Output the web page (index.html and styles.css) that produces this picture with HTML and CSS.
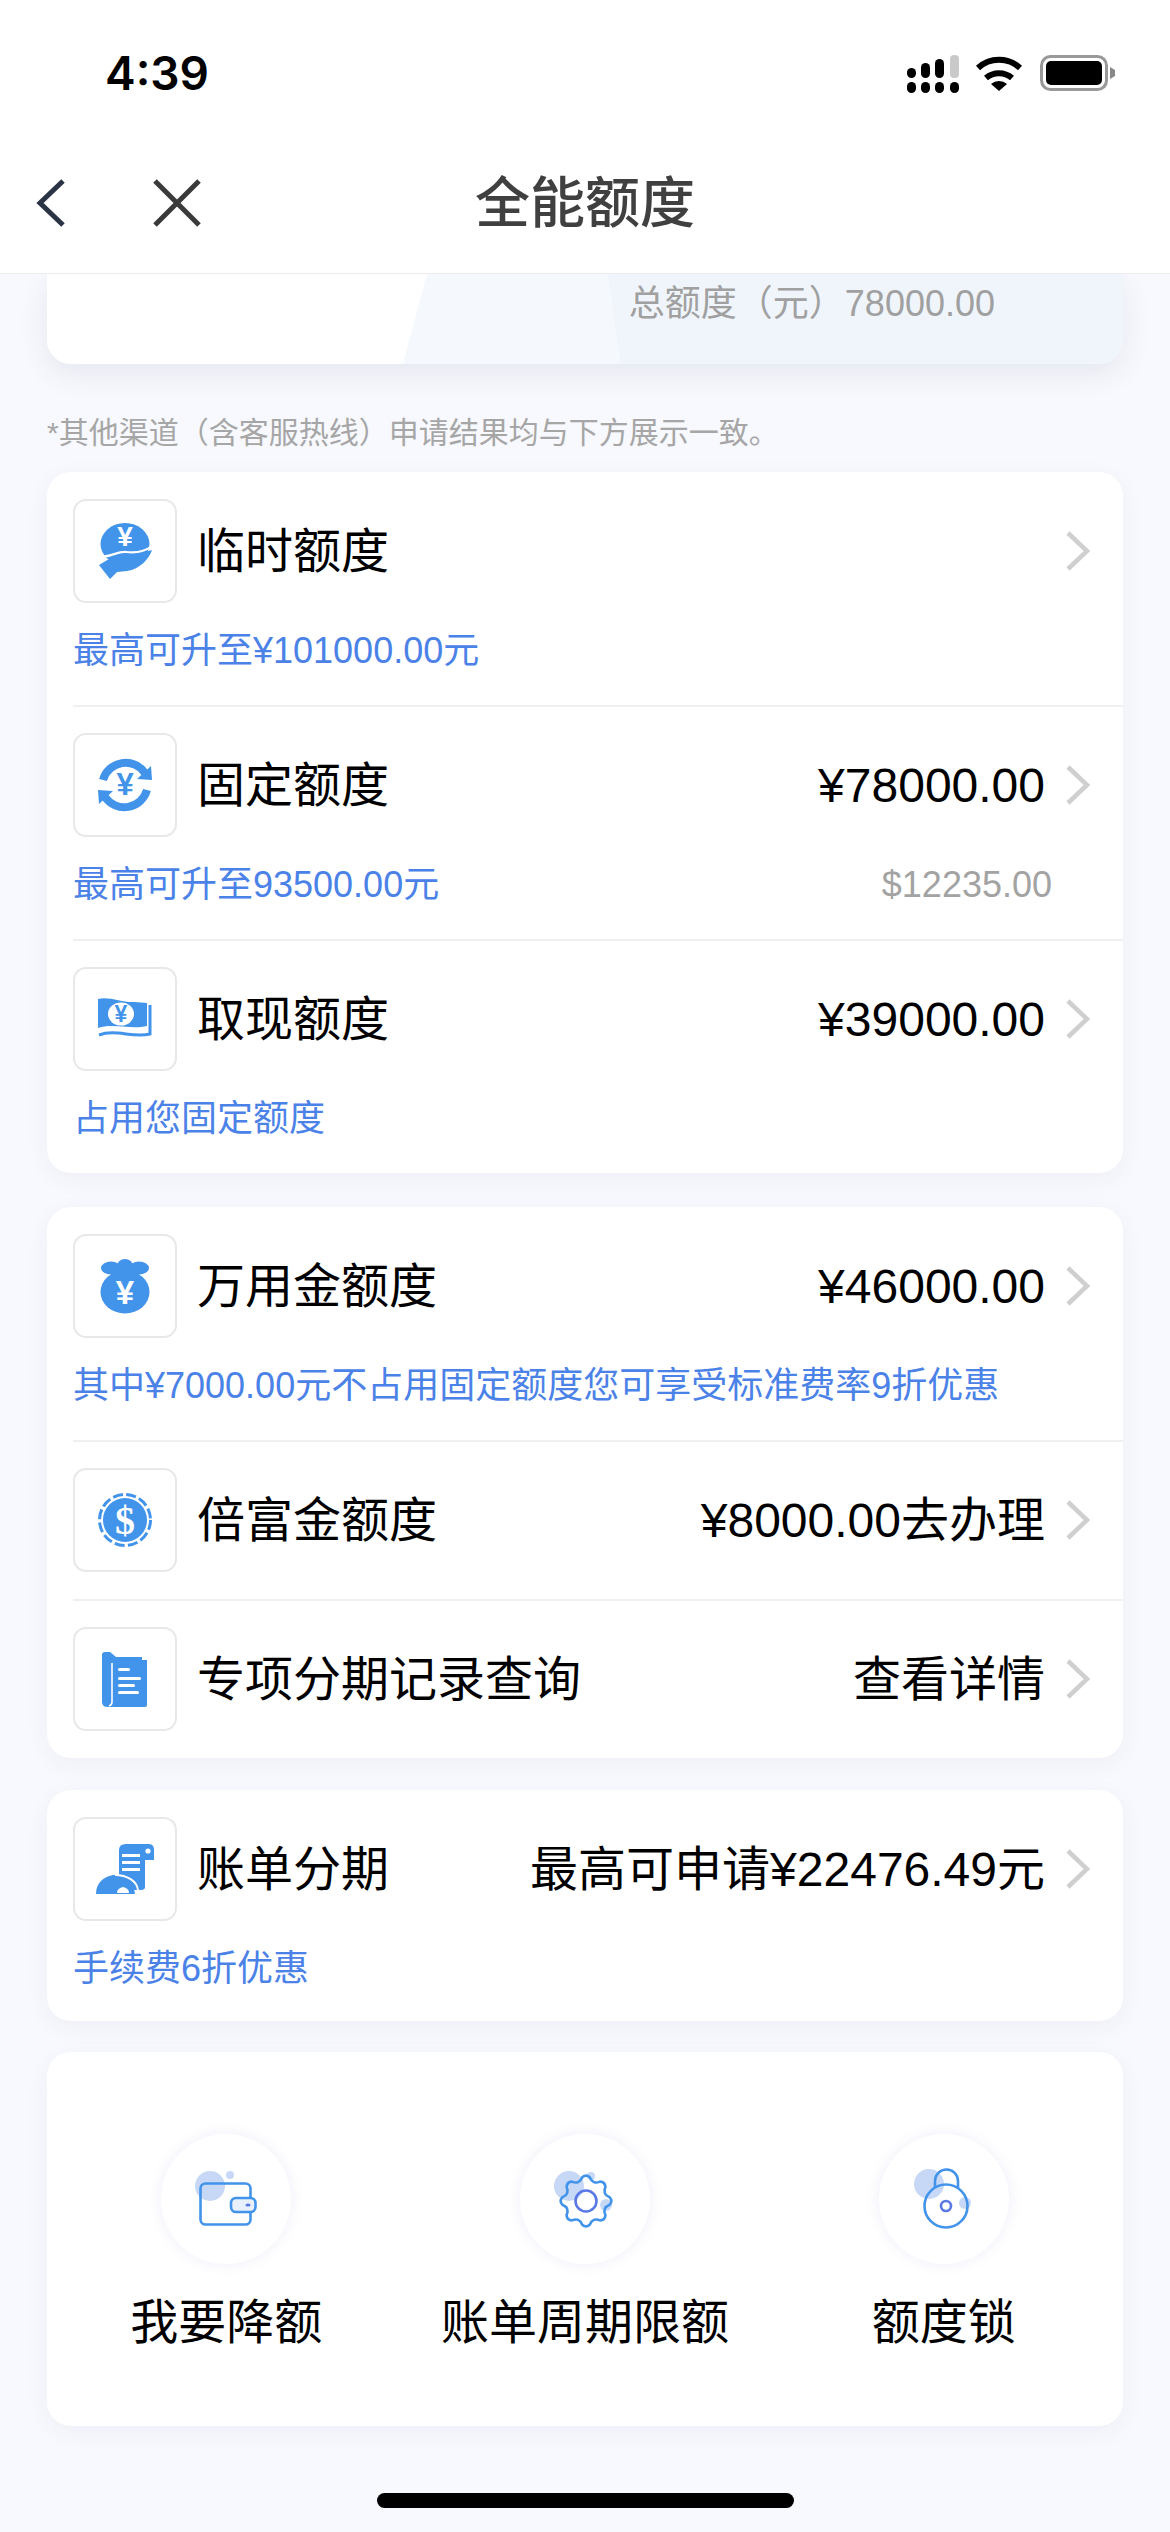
FILE: index.html
```html
<!DOCTYPE html>
<html lang="zh-CN">
  <head>
    <meta charset="utf-8">
    <title>全能额度</title>
    <link rel="stylesheet" href="styles.css">
  </head>

  <body>
    <header class="top">
      <div class="status">
        <span class="time">4:39</span>
        <div class="status-icons">
          <svg class="signal" viewBox="0 0 52 38">
            <rect x="0" y="13" width="9" height="10" rx="4.5"/>
            <rect x="14" y="8" width="9" height="15" rx="4.5"/>
            <rect x="28" y="4" width="9" height="19" rx="4.5"/>
            <rect x="43" y="0" width="9" height="23" rx="4" fill="#c9c9c9"/>
            <rect x="0" y="27" width="9" height="11" rx="4.5"/>
            <rect x="14" y="27" width="9" height="11" rx="4.5"/>
            <rect x="28" y="27" width="9" height="11" rx="4.5"/>
            <rect x="43" y="27" width="9" height="11" rx="4.5"/>
          </svg>
          <svg class="wifi" viewBox="0 0 48 36">
            <path d="M3 13 A31 31 0 0 1 45 13" fill="none" stroke="#000" stroke-width="6"/>
            <path d="M11 23 A20 20 0 0 1 37 23" fill="none" stroke="#000" stroke-width="6"/>
            <path d="M16 29 A12 12 0 0 1 32 29 L24 36 Z"/>
          </svg>
          <svg class="battery" viewBox="0 0 75 36">
            <rect x="1.5" y="1.5" width="65" height="33" rx="9" fill="none" stroke="#999" stroke-width="3"/>
            <rect x="6" y="6" width="56" height="24" rx="5"/>
            <path d="M70 12 L75 15 V21 L70 24 Z" fill="#888"/>
          </svg>
        </div>
      </div>
      <nav class="nav">
        <div class="nav-left">
          <svg class="back" viewBox="0 0 30 50">
            <path d="M27 3 L4 25 L27 47" fill="none" stroke="#2b3445" stroke-width="5"/>
          </svg>
          <svg class="close" viewBox="0 0 50 50">
            <path d="M3 3 L47 47 M47 3 L3 47" fill="none" stroke="#3a3a3a" stroke-width="5"/>
          </svg>
        </div>
        <h1>全能额度</h1>
      </nav>
    </header>

    <main class="page">
      <section class="summary">
        <div class="summary-total">总额度（元）78000.00</div>
      </section>

      <p class="note">*其他渠道（含客服热线）申请结果均与下方展示一致。</p>

      <section class="card">
        <div class="row">
          <div class="row-head">
            <div class="icon-box">
              <svg viewBox="0 0 104 104">
                <ellipse cx="52" cy="45" rx="24.5" ry="21" fill="#4293ea"/>
                <path d="M26 66 L36 60 C45 55 52 58 60 57 C67 56 73 52 79 51 C76 60 67 70 54 72 L44 73 L37 80 Z" fill="#4293ea"/>
                <path d="M28 57 C37 59 44 52 53 53 C61 54 70 54 79 47" fill="none" stroke="#fff" stroke-width="2.2"/>
                <text class="glyph" x="52" y="47" font-size="28">¥</text>
              </svg>
            </div>
            <span class="title">临时额度</span>
            <svg class="arrow" viewBox="0 0 26 42"><path d="M3 3 L22 21 L3 39"/></svg>
          </div>
          <div class="sub"><span class="hint">最高可升至¥101000.00元</span></div>
        </div>

        <div class="row">
          <div class="row-head">
            <div class="icon-box">
              <svg viewBox="0 0 104 104">
                <path d="M30 47 A23.500 23.500 0 0 1 72 40" fill="none" stroke="#4293ea" stroke-width="8"/>
                <path d="M64 46 L79 47 L78 33 Z" fill="#4293ea"/>
                <path d="M74 57 A23.500 23.500 0 0 1 32 64" fill="none" stroke="#4293ea" stroke-width="8"/>
                <path d="M40 58 L25 57 L26 71 Z" fill="#4293ea"/>
                <text class="glyph glyph-blue" x="52" y="62" font-size="31">¥</text>
              </svg>
            </div>
            <span class="title">固定额度</span>
            <span class="value">¥78000.00</span>
            <svg class="arrow" viewBox="0 0 26 42"><path d="M3 3 L22 21 L3 39"/></svg>
          </div>
          <div class="sub">
            <span class="hint">最高可升至93500.00元</span>
            <span class="usd">$12235.00</span>
          </div>
        </div>

        <div class="row">
          <div class="row-head">
            <div class="icon-box">
              <svg viewBox="0 0 104 104">
                <path d="M25 32 C36 29 50 36 62 35 L74 36 V59 C58 63 40 56 25 61 Z" fill="#4293ea"/>
                <ellipse cx="48" cy="47" rx="13" ry="11.500" fill="#fff"/>
                <path d="M77 38 V67 C60 71 42 62 26 68" fill="none" stroke="#4293ea" stroke-width="3"/>
                <text class="glyph glyph-blue" x="48" y="55" font-size="23">¥</text>
              </svg>
            </div>
            <span class="title">取现额度</span>
            <span class="value">¥39000.00</span>
            <svg class="arrow" viewBox="0 0 26 42"><path d="M3 3 L22 21 L3 39"/></svg>
          </div>
          <div class="sub"><span class="hint">占用您固定额度</span></div>
        </div>
      </section>

      <section class="card card-gap">
        <div class="row">
          <div class="row-head">
            <div class="icon-box">
              <svg viewBox="0 0 104 104">
                <ellipse cx="38" cy="34" rx="10" ry="6.500" fill="#4293ea"/>
                <ellipse cx="66" cy="34" rx="10" ry="6.500" fill="#4293ea"/>
                <ellipse cx="52" cy="32" rx="8" ry="7" fill="#4293ea"/>
                <ellipse cx="52" cy="58" rx="24.500" ry="21.500" fill="#4293ea"/>
                <path d="M40 36 H64 L66 42 H38 Z" fill="#4293ea"/>
                <text class="glyph" x="52" y="70" font-size="33">¥</text>
              </svg>
            </div>
            <span class="title">万用金额度</span>
            <span class="value">¥46000.00</span>
            <svg class="arrow" viewBox="0 0 26 42"><path d="M3 3 L22 21 L3 39"/></svg>
          </div>
          <div class="sub"><span class="hint">其中¥7000.00元不占用固定额度您可享受标准费率9折优惠</span></div>
        </div>

        <div class="row row-plain">
          <div class="row-head">
            <div class="icon-box">
              <svg viewBox="0 0 104 104">
                <circle cx="52" cy="52" r="22" fill="#4293ea"/>
                <circle cx="52" cy="52" r="25.500" fill="none" stroke="#4293ea" stroke-width="3" stroke-dasharray="10 3.400"/>
                <text class="glyph glyph-serif" x="52" y="66" font-size="40">$</text>
              </svg>
            </div>
            <span class="title">倍富金额度</span>
            <span class="value">¥8000.00去办理</span>
            <svg class="arrow" viewBox="0 0 26 42"><path d="M3 3 L22 21 L3 39"/></svg>
          </div>
        </div>

        <div class="row row-plain">
          <div class="row-head">
            <div class="icon-box">
              <svg viewBox="0 0 104 104">
                <path d="M29 28 Q29 25 32 25 H37 L43 30 H69 V33 H74 V78 Q74 80 72 80 H35 Q29 80 29 75 Z" fill="#4293ea"/>
                <path d="M39 36 V75 Q39 78 36 79" fill="none" stroke="#fff" stroke-width="1.6"/>
                <rect x="45" y="41" width="12" height="3" rx="1.5" fill="#fff"/>
                <rect x="45" y="50" width="23" height="3" rx="1.5" fill="#fff"/>
                <rect x="45" y="57" width="17" height="3" rx="1.5" fill="#fff"/>
                <rect x="45" y="64" width="21" height="3" rx="1.5" fill="#fff"/>
              </svg>
            </div>
            <span class="title">专项分期记录查询</span>
            <span class="value">查看详情</span>
            <svg class="arrow" viewBox="0 0 26 42"><path d="M3 3 L22 21 L3 39"/></svg>
          </div>
        </div>
      </section>

      <section class="card card-gap-small">
        <div class="row row-short">
          <div class="row-head">
            <div class="icon-box">
              <svg viewBox="0 0 104 104">
                <path d="M46 60 V33 Q46 27 53 27 H76 Q81 27 81 33 V43 H72 V70 Q72 73 68 73 H60 L50 60 Z" fill="#4293ea"/>
                <path d="M23 77 C23 66 30 60 40 58 C50 57 60 62 62 77 Z" fill="#4293ea"/>
                <path d="M42 58 C54 58 64 64 65 73" fill="none" stroke="#fff" stroke-width="2"/>
                <path d="M50 70 A7 6 0 0 1 56 76 H44 A7 6 0 0 1 50 70 Z" fill="#fff"/>
                <rect x="49" y="37" width="18" height="3" fill="#fff"/>
                <rect x="49" y="44" width="18" height="3" fill="#fff"/>
                <rect x="49" y="51" width="18" height="3" fill="#fff"/>
                <circle cx="75" cy="34" r="2.600" fill="#fff"/>
              </svg>
            </div>
            <span class="title">账单分期</span>
            <span class="value">最高可申请¥22476.49元</span>
            <svg class="arrow" viewBox="0 0 26 42"><path d="M3 3 L22 21 L3 39"/></svg>
          </div>
          <div class="sub"><span class="hint">手续费6折优惠</span></div>
        </div>
      </section>

      <section class="card actions">
        <div class="action">
          <div class="action-icon">
            <svg viewBox="0 0 130 130">
              <circle cx="49" cy="52" r="15" fill="#c7d8f6"/>
              <circle cx="69" cy="41" r="4" fill="#c7d8f6"/>
              <rect x="39.5" y="49.5" width="50" height="41" rx="5" fill="none" stroke="#4293ea" stroke-width="2.6"/>
              <rect x="70" y="64" width="24.500" height="14" rx="5" fill="#e8f0fc" stroke="#4293ea" stroke-width="2.6"/>
              <ellipse cx="87" cy="71" rx="2.600" ry="1.600" fill="#5a78e6"/>
            </svg>
          </div>
          <span class="action-label">我要降额</span>
        </div>
        <div class="action">
          <div class="action-icon">
            <svg viewBox="0 0 130 130">
              <circle cx="49" cy="52" r="15" fill="#c7d8f6"/>
              <circle cx="71" cy="42" r="4" fill="#c7d8f6"/>
              <circle cx="86" cy="71" r="6" fill="#c7d8f6"/>
              <path transform="translate(66 67)" fill="none" stroke="#4293ea" stroke-width="2.6"
                d="M-3.75 -23.7 Q0 -27 3.75 -23.7 Q6.7 -16.17 14.11 -19.42 Q19.09 -19.09 19.42 -14.11 Q16.17 -6.7 23.7 -3.75 Q27 0 23.7 3.75 Q16.17 6.7 19.42 14.11 Q19.09 19.09 14.11 19.42 Q6.7 16.17 3.75 23.7 Q0 27 -3.75 23.7 Q-6.7 16.17 -14.11 19.42 Q-19.09 19.09 -19.42 14.11 Q-16.17 6.7 -23.7 3.75 Q-27 0 -23.7 -3.75 Q-16.17 -6.7 -19.42 -14.11 Q-19.09 -19.09 -14.11 -19.42 Q-6.7 -16.17 -3.75 -23.7 Z"/>
              <circle cx="66" cy="67" r="10.500" fill="none" stroke="#5a78e6" stroke-width="2.6"/>
            </svg>
          </div>
          <span class="action-label">账单周期限额</span>
        </div>
        <div class="action">
          <div class="action-icon">
            <svg viewBox="0 0 130 130">
              <circle cx="50" cy="50" r="15" fill="#c7d8f6"/>
              <circle cx="86" cy="69" r="6" fill="#c7d8f6"/>
              <path d="M56 54 V47 A11.500 11.500 0 0 1 79 47 V54" fill="none" stroke="#4293ea" stroke-width="2.6"/>
              <circle cx="67" cy="72" r="21.500" fill="none" stroke="#4293ea" stroke-width="2.6"/>
              <circle cx="67" cy="72" r="5" fill="none" stroke="#5a78e6" stroke-width="2.6"/>
            </svg>
          </div>
          <span class="action-label">额度锁</span>
        </div>
      </section>

      <div class="home-bar"></div>
    </main>
  </body>
</html>
```

FILE: styles.css
```css
/* general styling */
* {
  box-sizing: border-box;
  margin: 0;
  padding: 0;
}

html,
body {
  height: 100%;
  margin: 0;
}

body {
  background-color: #f8f9fe;
  color: #000;
  font-family: "Liberation Sans", "Noto Sans CJK SC", sans-serif;
  overflow: hidden;
}

/* status bar and title bar */
.top {
  background-color: #fff;
  border-bottom: 1px solid #ececec;
  height: 274px;
  position: relative;
  z-index: 1;
}

.status {
  align-items: flex-start;
  display: flex;
  height: 133px;
  justify-content: space-between;
  padding: 51px 55px 0 105px;
}

.time {
  font-family: Inter, "Liberation Sans", sans-serif;
  font-size: 46px;
  font-weight: 600;
  line-height: 44px;
}

.status-icons {
  align-items: flex-start;
  display: flex;
  padding-top: 4px;
}

.signal {
  height: 38px;
  width: 52px;
}

.wifi {
  height: 36px;
  margin-left: 16px;
  width: 48px;
}

.battery {
  height: 36px;
  margin-left: 17px;
  width: 75px;
}

.nav {
  align-items: center;
  display: grid;
  grid-template-columns: 1fr auto 1fr;
  height: 140px;
}

.nav-left {
  align-items: center;
  display: flex;
  gap: 86px;
  padding-left: 36px;
}

.back {
  height: 50px;
  width: 30px;
}

.close {
  height: 50px;
  width: 50px;
}

h1 {
  color: #404040;
  font-size: 55px;
  font-weight: 500;
  line-height: 70px;
}

/* page body */
.page {
  padding: 0 47px;
}

.summary {
  background:
    linear-gradient(82deg, transparent 568px, #f0f5fc 568px),
    linear-gradient(105deg, #fff 367px, #f5f8fc 367px);
  border-radius: 0 0 24px 24px;
  box-shadow: 0 10px 30px rgba(40, 50, 90, 0.09);
  display: flex;
  height: 90px;
  justify-content: flex-end;
  padding: 8px 128px 0 0;
}

.summary-total {
  color: #a0a0a0;
  font-size: 36px;
  line-height: 44px;
}

.note {
  color: #a6a6a6;
  font-size: 30px;
  line-height: 40px;
  margin-top: 49px;
}

.card {
  background-color: #fff;
  border-radius: 24px;
  box-shadow: 0 6px 24px rgba(40, 50, 90, 0.05);
  margin-top: 19px;
  overflow: hidden;
}

.card-gap {
  margin-top: 34px;
}

.card-gap-small {
  margin-top: 32px;
}

/* rows */
.row {
  border-top: 2px solid #f0f0f0;
  margin-left: 26px;
  padding: 26px 32px 29px 0;
}

.row:first-child {
  border-top: 0;
  padding-top: 27px;
}

.row-plain {
  padding-bottom: 27px;
}

.row-short {
  padding-bottom: 27px;
}

.row-head {
  align-items: center;
  display: flex;
}

.icon-box {
  border: 2px solid #e8e8e8;
  border-radius: 13px;
  flex-shrink: 0;
  height: 104px;
  width: 104px;
}

.icon-box svg {
  display: block;
  height: 104px;
  margin: -2px;
  width: 104px;
}

.glyph {
  fill: #fff;
  font-family: "Liberation Sans", sans-serif;
  font-weight: 700;
  text-anchor: middle;
}

.glyph-blue {
  fill: #4293ea;
}

.glyph-serif {
  font-family: "Liberation Serif", serif;
}

.title {
  flex: 1;
  font-size: 48px;
  line-height: 60px;
  margin-left: 20px;
  padding-top: 2px;
}

.value {
  font-size: 48px;
  line-height: 60px;
  padding-top: 2px;
}

.arrow {
  fill: none;
  flex-shrink: 0;
  height: 42px;
  margin-left: 20px;
  stroke: #cfcfcf;
  stroke-width: 4.5;
  width: 26px;
}

.sub {
  align-items: center;
  display: flex;
  height: 50px;
  justify-content: space-between;
  margin-top: 23px;
}

.hint {
  color: #4b82e8;
  font-size: 36px;
  line-height: 50px;
  white-space: nowrap;
}

.usd {
  color: #a3a3a3;
  font-size: 36px;
  line-height: 50px;
  margin-right: 39px;
}

/* bottom shortcuts */
.actions {
  display: grid;
  grid-template-columns: repeat(3, 1fr);
  height: 374px;
  margin-top: 31px;
  padding-top: 82px;
}

.action {
  align-items: center;
  display: flex;
  flex-direction: column;
}

.action-icon {
  background-color: #fff;
  border-radius: 50%;
  box-shadow: 0 0 14px rgba(90, 90, 220, 0.1);
  height: 130px;
  width: 130px;
}

.action-icon svg {
  display: block;
  height: 130px;
  width: 130px;
}

.action-label {
  font-size: 48px;
  line-height: 60px;
  margin-top: 29px;
}

.home-bar {
  background-color: #000;
  border-radius: 8px;
  height: 15px;
  margin: 67px auto 0;
  width: 417px;
}
```
